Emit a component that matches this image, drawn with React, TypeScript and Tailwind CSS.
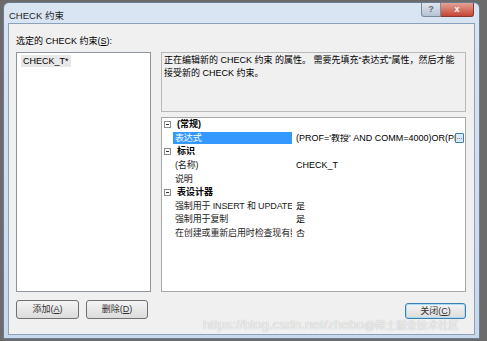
import React from 'react';

const font = "font-['Liberation_Sans','Noto_Sans_CJK_SC',sans-serif]";

function Box() {
  return (
    <span className="w-[7px] h-[7px] border border-[#8a8a8a] bg-white flex items-center justify-center">
      <span className="w-[3px] h-px bg-[#333]" />
    </span>
  );
}

function Category({ label }: { label: string }) {
  return (
    <div className="flex h-[13.6px] items-center">
      <div className="w-[11px] h-full flex items-center justify-center">
        <Box />
      </div>
      <div className="pl-[4px] font-bold text-black leading-none">{label}</div>
    </div>
  );
}

function Prop({ name, value, selected, more }: { name: string; value?: string; selected?: boolean; more?: boolean }) {
  return (
    <div className="flex h-[13.6px] items-center">
      <div className="w-[11px] h-full" />
      <div className="w-[120px] h-full flex items-center overflow-hidden">
        <div
          className={`w-[119px] h-[12px] flex items-center pl-[2px] whitespace-nowrap overflow-hidden leading-none tracking-[-0.15px] ${
            selected ? 'bg-[#3399ff] text-white' : 'text-[#222]'
          }`}
        >
          {name}
        </div>
      </div>
      <div className="flex-1 h-full flex items-center pl-[3px] pr-[1px] min-w-0">
        <div className="flex-1 min-w-0 whitespace-nowrap overflow-hidden leading-none text-black">{value}</div>
        {more && (
          <span className="shrink-0 w-[9px] h-[10px] border border-[#3c7fb1] bg-[#d9ebfb] rounded-[1px] text-[7px] leading-[6px] text-[#234] flex justify-center">
            ...
          </span>
        )}
      </div>
    </div>
  );
}

function Btn({ children, def, w }: { children: React.ReactNode; def?: boolean; w: string }) {
  return (
    <button
      className={`${w} ${def ? 'h-[16px] border-[#3c7fb1] shadow-[inset_0_0_0_1px_#a9dcf6]' : 'h-[19px] border-[#707070]'} border rounded-[3px] bg-gradient-to-b from-[#f4f4f4] to-[#dcdcdc] text-[9px] text-[#333] flex items-center justify-center leading-none`}
    >
      {children}
    </button>
  );
}

export default function App() {
  return (
    <div className={`w-[487px] h-[341px] bg-[#6b6b6b] overflow-hidden relative ${font} text-[9px]`}>
      <div className="ml-[3px] mt-[2px] w-[477px] h-[337px] rounded-t-[6px] border border-[#6a7d93] bg-gradient-to-b from-[#d9e5f2] to-[#c9d8ea] flex flex-col px-[4px] pb-[3px]">
        {/* title bar */}
        <div className="h-[20px] flex items-start relative">
          <div className="pl-[1px] pt-[8px] text-[9.5px] leading-none text-[#1e1e1e]">CHECK 约束</div>
          <div className="ml-auto flex mr-[1px]">
            <div className="w-[20px] h-[14px] rounded-bl-[3px] border border-t-0 border-[#7a8ba0] bg-gradient-to-b from-[#dfe6ee] to-[#b6c3d2] text-[#5d6c7d] text-[9px] leading-[13px] text-center font-bold">
              ?
            </div>
            <div className="w-[33px] h-[14px] rounded-br-[3px] border border-t-0 border-l-0 border-[#8a3a32] bg-gradient-to-b from-[#e4a196] to-[#c44535] text-white text-[9px] leading-[13px] text-center font-bold">
              x
            </div>
          </div>
        </div>

        {/* client area */}
        <div className="flex-1 border border-[#8ba1bb] bg-[#f0f0f0] flex flex-col pl-[7px] pr-[8px] pt-[11px]">
          <div className="h-[12px] leading-[12px] text-black mb-[5px]">
            选定的 CHECK 约束(<span className="underline">S</span>):
          </div>

          <div className="flex gap-[10px] h-[240px]">
            <div className="w-[135px] h-full bg-white border border-[#8e959e] pt-[2px] pl-[4px]">
              <div className="inline-block bg-[#e8e8e8] px-[2px] h-[12px] leading-[12px] text-black">CHECK_T*</div>
            </div>

            <div className="w-[305px] h-full flex flex-col gap-[5px]">
              <div className="h-[60px] border border-[#b9b9b9] pl-[2px] pt-[1px] pr-[6px] leading-[13px] text-black">
                正在编辑新的 CHECK 约束 的属性。 需要先填充“表达式”属性，然后才能接受新的 CHECK 约束。
              </div>
              <div className="flex-1 bg-white border border-[#a7a7a7]">
                <Category label="(常规)" />
                <Prop name="表达式" value="(PROF='教授' AND COMM=4000)OR(PROF='副教授')" selected more />
                <Category label="标识" />
                <Prop name="(名称)" value="CHECK_T" />
                <Prop name="说明" />
                <Category label="表设计器" />
                <Prop name="强制用于 INSERT 和 UPDATE" value="是" />
                <Prop name="强制用于复制" value="是" />
                <Prop name="在创建或重新启用时检查现有数据" value="否" />
              </div>
            </div>
          </div>

          <div className="flex items-end mt-[8px]">
            <Btn w="w-[63px]">
              添加(<span className="underline">A</span>)
            </Btn>
            <div className="w-[7px]" />
            <Btn w="w-[62px]">
              删除(<span className="underline">D</span>)
            </Btn>
            <div className="ml-auto">
              <Btn w="w-[61px]" def>
                关闭(<span className="underline">C</span>)
              </Btn>
            </div>
          </div>
        </div>
      </div>

      {/* watermark */}
      <div className="absolute left-[203px] top-[315px] flex items-baseline whitespace-nowrap text-white/80 [text-shadow:0_0_1px_rgba(0,0,0,0.35)]">
        <span className="text-[13.5px]">https://blog.csdn.net/zhebo</span>
        <span className="text-[10.5px]">@稀土掘金技术社区</span>
      </div>
    </div>
  );
}
